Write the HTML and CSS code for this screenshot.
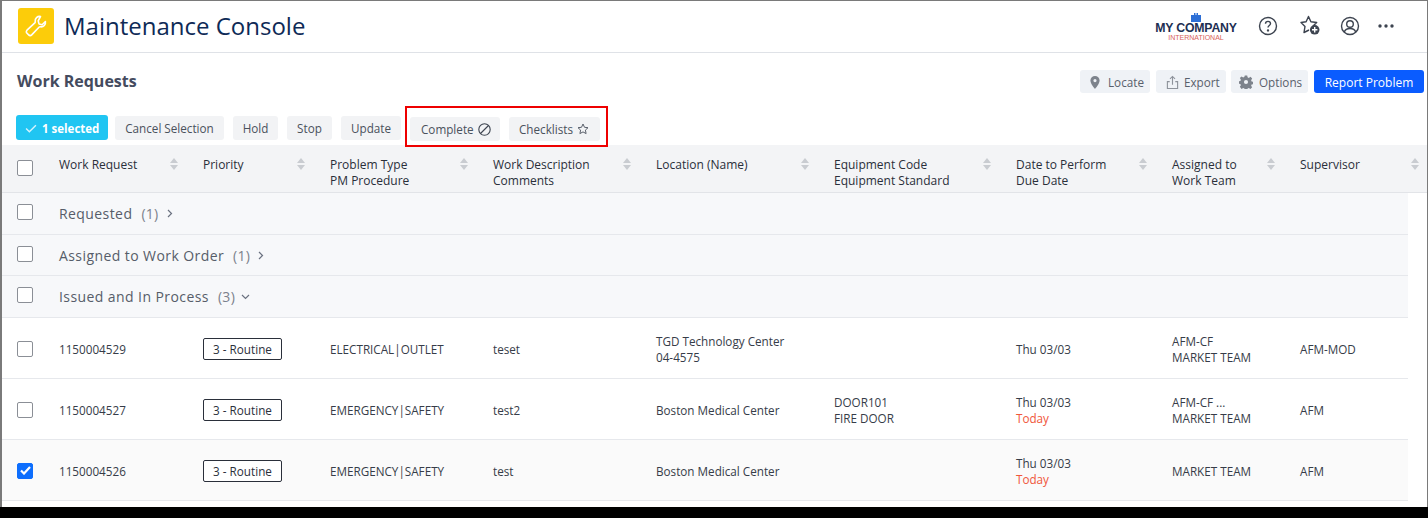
FILE: index.html
```html
<!DOCTYPE html>
<html lang="en">
<head>
<meta charset="utf-8">
<title>Maintenance Console</title>
<link rel="stylesheet" href="styles.css">
</head>
<body>
<div class="frame">
  <header class="topbar">
    <div class="app-icon">
      <svg width="24" height="24" viewBox="0 0 24 24" fill="none" stroke="#fff" stroke-width="1.600" stroke-linejoin="round"><path d="M16.500 2.500c-3-.6-5.800 1.800-5.300 5 .1.600 0 1-.4 1.400L3 16.200c-.9.900-.9 2.200 0 3l1.700 1.700c.8.900 2.100.9 3 0l7.300-7.700c.4-.4.800-.5 1.400-.4 3.200.5 5.600-2.300 5-5.300l-3.300 3.200-3.100-.8-.8-3.100z"/></svg>
    </div>
    <h1 class="app-title">Maintenance Console</h1>
    <div class="top-actions">
      <div class="brand">
        <svg class="brand-mark" width="10" height="9" viewBox="0 0 10 9"><path fill="#2d6fd6" d="M0 2h3V0h1.500v2h1V0H7v2h3v7H0z"/></svg>
        <span class="brand-name">MY COMPANY</span>
        <span class="brand-sub">INTERNATIONAL</span>
      </div>
      <svg class="top-icon help" width="20" height="20" viewBox="0 0 20 20" fill="none" stroke="#3d4450" stroke-width="1.400"><circle cx="10" cy="10" r="8.500"/><path d="M7.500 7.800c0-1.500 1.100-2.400 2.500-2.400s2.500.9 2.500 2.200c0 1.900-2.500 1.900-2.500 4"/><circle cx="10" cy="14.400" r=".5" fill="#3d4450"/></svg>
      <svg class="top-icon fav" width="21" height="21" viewBox="0 0 21 21" fill="none"><path stroke="#3d4450" stroke-width="1.400" stroke-linejoin="round" d="M13 11l3.700-3.500-5.800-.7-2.400-5.300-2.400 5.300-5.100.7L5 11.400l-1 6.100 5-2.500"/><circle cx="14.700" cy="14.800" r="4.800" fill="#3d4450"/><path stroke="#fff" stroke-width="1.400" d="M14.700 12.100v5.400M12 14.800h5.400"/></svg>
      <svg class="top-icon user" width="20" height="20" viewBox="0 0 20 20" fill="none" stroke="#3d4450" stroke-width="1.400"><circle cx="10" cy="10" r="8.500"/><circle cx="10" cy="8" r="3.300"/><path d="M4.300 16c.8-2.500 3-3.500 5.700-3.500s4.900 1 5.700 3.500"/></svg>
      <svg class="top-icon more" width="16" height="4" viewBox="0 0 16 4" fill="#3d4450"><circle cx="2" cy="2" r="1.700"/><circle cx="8" cy="2" r="1.700"/><circle cx="14" cy="2" r="1.700"/></svg>
    </div>
  </header>

  <section class="page-head">
    <h2 class="page-title">Work Requests</h2>
    <div class="page-actions">
      <button class="btn soft locate"><svg width="10" height="13" viewBox="0 0 10 13"><path fill="#7d838c" d="M5 0a4.600 4.600 0 0 0-4.600 4.600C.4 8 5 13 5 13s4.600-5 4.600-8.400A4.600 4.600 0 0 0 5 0zm0 6.200a1.600 1.600 0 1 1 0-3.200 1.600 1.600 0 0 1 0 3.200z"/></svg>Locate</button>
      <button class="btn soft export"><svg width="13" height="15" viewBox="0 0 14 15" fill="none" stroke="#8e939b" stroke-width="1.200"><path d="M4 6.500H1.500v7.500h11V6.500H10"/><path d="M7 10V1M4.300 3.600 7 1l2.700 2.600"/></svg>Export</button>
      <button class="btn soft options"><svg width="14" height="14" viewBox="0 0 15 15"><path fill="#7d838c" fill-rule="evenodd" d="M6.200.5h2.600l.4 2 1.300.6 1.800-1.100 1.800 1.800-1.100 1.800.5 1.300 2 .4v2.400l-2 .5-.5 1.200 1.100 1.800-1.800 1.800-1.800-1.100-1.300.5-.4 2H6.200l-.4-2-1.300-.5-1.800 1.100L.9 12.700 2 10.900l-.5-1.200-2-.5V6.800l2-.4.500-1.300L.9 3.300l1.800-1.800 1.800 1.100 1.300-.6zM7.500 5.300a2.200 2.200 0 1 0 0 4.400 2.200 2.200 0 0 0 0-4.400z"/></svg>Options</button>
      <button class="btn primary">Report Problem</button>
    </div>
  </section>

  <div class="toolbar">
    <button class="btn selected"><svg width="12" height="9" viewBox="0 0 11 8" fill="none" stroke="#d5f3fd" stroke-width="1.300"><path d="M1 4l3 3 6-6"/></svg>1 selected</button>
    <button class="btn plain cancel">Cancel Selection</button>
    <button class="btn plain hold">Hold</button>
    <button class="btn plain stop">Stop</button>
    <button class="btn plain update">Update</button>
    <div class="callout">
      <button class="btn plain complete">Complete<svg width="13" height="13" viewBox="0 0 13 13" fill="none" stroke="#3d4450" stroke-width="1.100"><circle cx="6.500" cy="6.500" r="5.700"/><path d="M2.500 10.500l8-8"/></svg></button>
      <button class="btn plain checklists">Checklists<svg width="12" height="12" viewBox="0 0 12 12" fill="none" stroke="#5a606b" stroke-width="1"><path stroke-linejoin="round" d="M6 1l1.500 3.300 3.500.4-2.600 2.400.7 3.500L6 8.900l-3.100 1.700.7-3.500L1 4.700l3.500-.4z"/></svg></button>
    </div>
  </div>

  <div class="table">
    <div class="grid head-row">
      <div class="cell-check"><span class="check"></span></div>
      <div class="th"><div>Work Request</div><svg class="sort" viewBox="0 0 8 12"><path d="M4 0l4 5H0zM0 7h8l-4 5z"/></svg></div>
      <div class="th"><div>Priority</div><svg class="sort" viewBox="0 0 8 12"><path d="M4 0l4 5H0zM0 7h8l-4 5z"/></svg></div>
      <div class="th"><div>Problem Type<br>PM Procedure</div><svg class="sort" viewBox="0 0 8 12"><path d="M4 0l4 5H0zM0 7h8l-4 5z"/></svg></div>
      <div class="th"><div>Work Description<br>Comments</div><svg class="sort" viewBox="0 0 8 12"><path d="M4 0l4 5H0zM0 7h8l-4 5z"/></svg></div>
      <div class="th"><div>Location (Name)</div><svg class="sort" viewBox="0 0 8 12"><path d="M4 0l4 5H0zM0 7h8l-4 5z"/></svg></div>
      <div class="th"><div>Equipment Code<br>Equipment Standard</div><svg class="sort" viewBox="0 0 8 12"><path d="M4 0l4 5H0zM0 7h8l-4 5z"/></svg></div>
      <div class="th"><div>Date to Perform<br>Due Date</div><svg class="sort" viewBox="0 0 8 12"><path d="M4 0l4 5H0zM0 7h8l-4 5z"/></svg></div>
      <div class="th"><div>Assigned to<br>Work Team</div><svg class="sort" viewBox="0 0 8 12"><path d="M4 0l4 5H0zM0 7h8l-4 5z"/></svg></div>
      <div class="th"><div>Supervisor</div><svg class="sort last" viewBox="0 0 8 12"><path d="M4 0l4 5H0zM0 7h8l-4 5z"/></svg></div>
    </div>

    <div class="body">
      <div class="group g1"><div class="cell-check"><span class="check"></span></div><span class="group-name">Requested</span><span class="group-count">(1)</span><svg class="chev" width="6" height="9" viewBox="0 0 6 9" fill="none" stroke="#6b7280" stroke-width="1.200"><path d="M1 1l3.500 3.500L1 8"/></svg></div>
      <div class="group g2"><div class="cell-check"><span class="check"></span></div><span class="group-name">Assigned to Work Order</span><span class="group-count">(1)</span><svg class="chev" width="6" height="9" viewBox="0 0 6 9" fill="none" stroke="#6b7280" stroke-width="1.200"><path d="M1 1l3.500 3.500L1 8"/></svg></div>
      <div class="group g3"><div class="cell-check"><span class="check"></span></div><span class="group-name">Issued and In Process</span><span class="group-count">(3)</span><svg class="chev open" width="9" height="6" viewBox="0 0 9 6" fill="none" stroke="#6b7280" stroke-width="1.200"><path d="M1 1l3.500 3.500L8 1"/></svg></div>

      <div class="grid row">
        <div class="cell-check"><span class="check"></span></div>
        <div>1150004529</div>
        <div><span class="tag">3 - Routine</span></div>
        <div>ELECTRICAL|OUTLET</div>
        <div>teset</div>
        <div>TGD Technology Center<br>04-4575</div>
        <div></div>
        <div>Thu 03/03</div>
        <div>AFM-CF<br>MARKET TEAM</div>
        <div>AFM-MOD</div>
      </div>
      <div class="grid row">
        <div class="cell-check"><span class="check"></span></div>
        <div>1150004527</div>
        <div><span class="tag">3 - Routine</span></div>
        <div>EMERGENCY|SAFETY</div>
        <div>test2</div>
        <div>Boston Medical Center</div>
        <div>DOOR101<br>FIRE DOOR</div>
        <div>Thu 03/03<br><span class="today">Today</span></div>
        <div>AFM-CF ...<br>MARKET TEAM</div>
        <div>AFM</div>
      </div>
      <div class="grid row is-selected">
        <div class="cell-check"><span class="check on"><svg width="11" height="9" viewBox="0 0 11 9" fill="none" stroke="#fff" stroke-width="2.200"><path d="M1 4.500l3 3 6-6.500"/></svg></span></div>
        <div>1150004526</div>
        <div><span class="tag">3 - Routine</span></div>
        <div>EMERGENCY|SAFETY</div>
        <div>test</div>
        <div>Boston Medical Center</div>
        <div></div>
        <div>Thu 03/03<br><span class="today">Today</span></div>
        <div>MARKET TEAM</div>
        <div>AFM</div>
      </div>
    </div>
  </div>
</div>
</body>
</html>
```
FILE: styles.css
```css
* { box-sizing: border-box; }
html, body { margin: 0; height: 518px; overflow: hidden; background: #000; }
body { font-family: "Open Sans", "Noto Sans", sans-serif; font-size: 12px; color: #2f3642; }
button { font-family: inherit; font-size: 11.700px; border: 0; padding: 0; cursor: pointer; }

.frame { width: 1428px; height: 507px; background: #fff; border-top: 1px solid #7a7a7a; border-left: 2px solid #7a7a7a; border-right: 1px solid #7a7a7a; overflow: hidden; }

.topbar { height: 52px; display: flex; align-items: center; border-bottom: 1px solid #dfe2e7; padding-left: 16px; }
.app-icon { width: 36px; height: 36px; border-radius: 3px; background: #fccc0a; display: flex; align-items: center; justify-content: center; margin-top: -2px; }
.app-title { margin: -2px 0 0 10px; font-size: 24px; font-weight: 400; color: #0e2a56; line-height: 32px; }
.top-actions { margin-left: auto; display: flex; align-items: center; height: 100%; padding-right: 33px; }
.brand { width: 84px; display: flex; flex-direction: column; align-items: center; margin-top: 1px; }
.brand-mark { display: block; }
.brand-name { font-family: "Liberation Sans", sans-serif; font-size: 12.300px; font-weight: 700; line-height: 12px; color: #1d2f52; letter-spacing: -.2px; white-space: nowrap; }
.brand-sub { font-family: "Liberation Sans", sans-serif; font-size: 7px; line-height: 7px; color: #d9635a; white-space: nowrap; }
.top-icon { display: block; flex: none; margin-top: -2px; }
.help { margin-left: 20px; }
.fav { margin-left: 22px; }
.user { margin-left: 19px; }
.more { margin-left: 18px; }

.page-head { display: flex; justify-content: space-between; align-items: flex-start; height: 62px; padding: 17px 3px 0 15px; }
.page-title { margin: -1px 0 0; font-size: 16px; font-weight: 700; line-height: 24px; color: #444b5e; }
.page-actions { display: flex; gap: 6px; }
.btn { display: inline-flex; align-items: center; justify-content: flex-start; height: 23px; border-radius: 3px; white-space: nowrap; }
.soft { background: #eff2f6; color: #59606b; padding-top: 1px; }
.locate { width: 70px; padding-left: 10px; gap: 8px; }
.export { width: 70px; padding-left: 10px; gap: 5px; margin-right: -1px; }
.options { width: 77px; padding-left: 8px; gap: 6px; }
.primary { width: 110px; justify-content: center; background: #0a5cff; color: #fff; padding-top: 1px; font-size: 12px; }

.toolbar { height: 30px; display: flex; align-items: flex-start; padding-left: 14px; }
.plain { height: 24px; margin-top: 1px; background: #f2f3f5; color: #4a515c; justify-content: center; }
.selected { width: 92px; height: 25px; background: #20c5f2; color: #fff; font-weight: 700; font-size: 11.500px; gap: 5px; margin-right: 7px; padding: 1px 0 0 9px; }
.cancel { width: 109px; margin-right: 9px; }
.hold { width: 45px; margin-right: 9px; }
.stop { width: 45px; margin-right: 9px; }
.update { width: 60px; margin-right: 4px; }
.callout { display: flex; gap: 9px; width: 203px; height: 41px; margin-top: -9px; padding: 9px 0 0 3px; border: 2px solid #ee0000; }
.callout .btn { height: 24px; margin-top: 0; gap: 4px; justify-content: flex-start; }
.complete { width: 90px; padding-left: 11px; }
.checklists { width: 91px; padding-left: 10px; }

.table { width: 1425px; }
.grid { display: grid; grid-template-columns: 57px 144px 127px 163px 163px 178px 182px 156px 128px 150px; }
.head-row { height: 48px; width: 1443px; background: #f3f4f6; border-bottom: 1px solid #e2e4e8; padding-top: 12px; font-size: 12px; line-height: 16px; color: #2a2f3a; }
.head-row .cell-check { margin-top: -2px; align-items: flex-start; padding-top: 5px; }
.th { display: flex; justify-content: space-between; align-items: flex-start; padding-right: 25px; }
.sort { width: 8px; height: 12px; margin-top: 1px; fill: #c9ccd1; flex: none; }
.sort.last { margin-right: 6px; }

.cell-check { display: flex; justify-content: flex-start; align-items: center; padding-left: 15px; }
.check { display: flex; align-items: center; justify-content: center; width: 16px; height: 16px; border: 1px solid #8b8f96; border-radius: 2px; background: #fff; }
.check.on { background: #0d6efd; border-color: #0d6efd; }

.body { width: 1406px; }
.group { display: flex; align-items: center; background: #f7f8fa; border-bottom: 1px solid #e6e8ec; color: #565d69; }
.g1 { height: 42px; }
.g2 { height: 41px; }
.g3 { height: 42px; }
.group .cell-check { width: 57px; margin-top: -3px; }
.group-name { font-size: 14px; font-weight: 500; letter-spacing: .42px; }
.group-count { font-size: 14px; font-weight: 500; margin-left: 9px; color: #7b818c; letter-spacing: .3px; }
.chev { margin-left: 8px; }
.chev.open { margin-left: 6px; }

.row { height: 61px; border-bottom: 1px solid #e6e8ec; align-items: center; font-size: 11.700px; line-height: 16px; color: #363c48; padding-top: 2px; }
.row > div { padding-right: 4px; }
.row .cell-check { margin-top: -1px; }
.is-selected { background: #fafafa; }
.tag { display: block; width: 79px; height: 22px; line-height: 20px; text-align: center; border: 1px solid #2a2f3a; border-radius: 2px; color: #2a2f3a; background: #fff; }
.today { color: #f0563a; }
```
